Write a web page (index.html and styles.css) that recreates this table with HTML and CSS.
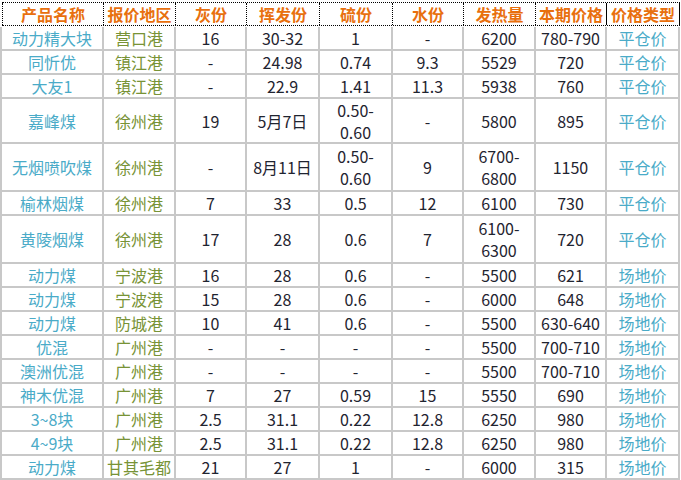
FILE: index.html
```html
<!DOCTYPE html>
<html lang="zh-CN">
<head>
<meta charset="utf-8">
<title>煤炭价格表</title>
<link rel="stylesheet" href="styles.css">
</head>
<body>
<div class="sheet">
  <div class="head">
    <div class="h">产品名称</div>
    <div class="h">报价地区</div>
    <div class="h">灰份</div>
    <div class="h">挥发份</div>
    <div class="h">硫份</div>
    <div class="h">水份</div>
    <div class="h">发热量</div>
    <div class="h">本期价格</div>
    <div class="h h-last">价格类型</div>
  </div>
  <div class="body">
    <div class="c name">动力精大块</div><div class="c port">营口港</div><div class="c">16</div><div class="c">30-32</div><div class="c">1</div><div class="c">-</div><div class="c">6200</div><div class="c">780-790</div><div class="c type">平仓价</div>
    <div class="c name">同忻优</div><div class="c port">镇江港</div><div class="c">-</div><div class="c">24.98</div><div class="c">0.74</div><div class="c">9.3</div><div class="c">5529</div><div class="c">720</div><div class="c type">平仓价</div>
    <div class="c name">大友1</div><div class="c port">镇江港</div><div class="c">-</div><div class="c">22.9</div><div class="c">1.41</div><div class="c">11.3</div><div class="c">5938</div><div class="c">760</div><div class="c type">平仓价</div>
    <div class="c name">嘉峰煤</div><div class="c port">徐州港</div><div class="c">19</div><div class="c">5月7日</div><div class="c">0.50-<br>0.60</div><div class="c">-</div><div class="c">5800</div><div class="c">895</div><div class="c type">平仓价</div>
    <div class="c name">无烟喷吹煤</div><div class="c port">徐州港</div><div class="c">-</div><div class="c">8月11日</div><div class="c">0.50-<br>0.60</div><div class="c">9</div><div class="c">6700-<br>6800</div><div class="c">1150</div><div class="c type">平仓价</div>
    <div class="c name">榆林烟煤</div><div class="c port">徐州港</div><div class="c">7</div><div class="c">33</div><div class="c">0.5</div><div class="c">12</div><div class="c">6100</div><div class="c">730</div><div class="c type">平仓价</div>
    <div class="c name">黄陵烟煤</div><div class="c port">徐州港</div><div class="c">17</div><div class="c">28</div><div class="c">0.6</div><div class="c">7</div><div class="c">6100-<br>6300</div><div class="c">720</div><div class="c type">平仓价</div>
    <div class="c name">动力煤</div><div class="c port">宁波港</div><div class="c">16</div><div class="c">28</div><div class="c">0.6</div><div class="c">-</div><div class="c">5500</div><div class="c">621</div><div class="c type">场地价</div>
    <div class="c name">动力煤</div><div class="c port">宁波港</div><div class="c">15</div><div class="c">28</div><div class="c">0.6</div><div class="c">-</div><div class="c">6000</div><div class="c">648</div><div class="c type">场地价</div>
    <div class="c name">动力煤</div><div class="c port">防城港</div><div class="c">10</div><div class="c">41</div><div class="c">0.6</div><div class="c">-</div><div class="c">5500</div><div class="c">630-640</div><div class="c type">场地价</div>
    <div class="c name">优混</div><div class="c port">广州港</div><div class="c">-</div><div class="c">-</div><div class="c">-</div><div class="c">-</div><div class="c">5500</div><div class="c">700-710</div><div class="c type">场地价</div>
    <div class="c name">澳洲优混</div><div class="c port">广州港</div><div class="c">-</div><div class="c">-</div><div class="c">-</div><div class="c">-</div><div class="c">5500</div><div class="c">700-710</div><div class="c type">场地价</div>
    <div class="c name">神木优混</div><div class="c port">广州港</div><div class="c">7</div><div class="c">27</div><div class="c">0.59</div><div class="c">15</div><div class="c">5550</div><div class="c">690</div><div class="c type">场地价</div>
    <div class="c name">3~8块</div><div class="c port">广州港</div><div class="c">2.5</div><div class="c">31.1</div><div class="c">0.22</div><div class="c">12.8</div><div class="c">6250</div><div class="c">980</div><div class="c type">场地价</div>
    <div class="c name">4~9块</div><div class="c port">广州港</div><div class="c">2.5</div><div class="c">31.1</div><div class="c">0.22</div><div class="c">12.8</div><div class="c">6250</div><div class="c">980</div><div class="c type">场地价</div>
    <div class="c name">动力煤</div><div class="c port">甘其毛都</div><div class="c">21</div><div class="c">27</div><div class="c">1</div><div class="c">-</div><div class="c">6000</div><div class="c">315</div><div class="c type">场地价</div>
  </div>
</div>
</body>
</html>
```
FILE: styles.css
```css
html, body {
  margin: 0;
  padding: 0;
  background: #ffffff;
}

body {
  font-family: "Noto Sans CJK SC", "Noto Sans", sans-serif;
  font-size: 16px;
  color: #1f2430;
}

.sheet {
  width: 680px;
}

.head {
  display: grid;
  grid-template-columns: 101px 72px 71px 73px 73px 71px 72px 71px 74px;
  margin: 2px 0 0 2px;
  width: 678px;
  border-top: 1px dotted #000;
  border-bottom: 1px dotted #000;
  box-sizing: border-box;
  height: 24px;
}

.h {
  border-left: 1px dotted #000;
  display: flex;
  align-items: center;
  justify-content: center;
  font-weight: bold;
  color: #e8700e;
  line-height: 22px;
  white-space: nowrap;
}

.h-last {
  border-left: 1px solid #000;
  border-right: 1px solid #000;
}

.body {
  display: grid;
  grid-template-columns: 100px 70px 69px 71px 71px 69px 70px 69px 71px;
  grid-template-rows: 22px 22px 22px 43px 46px 22px 46px repeat(9, 22px);
  gap: 2px;
  padding: 0 2px 2px 2px;
  margin-top: 1px;
  background: #c8c8c8;
  width: 680px;
  box-sizing: border-box;
}

.c {
  background: #ffffff;
  display: flex;
  align-items: center;
  justify-content: center;
  text-align: center;
  line-height: 22px;
  white-space: nowrap;
}

.name,
.type {
  color: #4aabc8;
}

.port {
  color: #789336;
}
```
